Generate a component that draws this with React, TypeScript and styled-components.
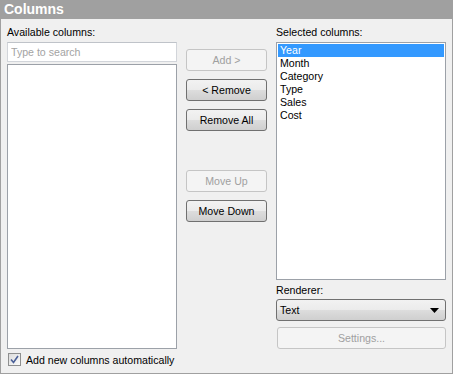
import React from 'react';
import styled, { createGlobalStyle, css } from 'styled-components';

const GlobalStyle = createGlobalStyle`
  html, body {
    margin: 0;
    padding: 0;
    background: #ffffff;
  }
  body {
    font-family: "Liberation Sans", Arial, sans-serif;
    font-size: 10.6px;
    color: #000;
  }
`;

const available: string[] = [];
const selected = ['Year', 'Month', 'Category', 'Type', 'Sales', 'Cost'];

const App = () => {
  return (
    <>
      <GlobalStyle />
      <Panel>
        <Header>Columns</Header>
        <Body>
          <Column>
            <Label>Available columns:</Label>
            <Search placeholder="Type to search" />
            <List $grow>
              {available.map(item => (
                <Item key={item}>{item}</Item>
              ))}
            </List>
            <CheckRow>
              <CheckBox>
                <svg width="9" height="9" viewBox="0 0 9 9">
                  <path d="M1 4.5 L3.5 7.5 L8 1" fill="none" stroke="#4a5f97" strokeWidth="1.6" />
                </svg>
              </CheckBox>
              Add new columns automatically
            </CheckRow>
          </Column>

          <Middle>
            <Button disabled>Add &gt;</Button>
            <Button>&lt; Remove</Button>
            <Button>Remove All</Button>
            <Spacer />
            <Button disabled>Move Up</Button>
            <Button>Move Down</Button>
          </Middle>

          <Column>
            <Label>Selected columns:</Label>
            <List $height={238}>
              {selected.map((item, i) => (
                <Item key={item} $active={i === 0}>{item}</Item>
              ))}
            </List>
            <Label $top={4}>Renderer:</Label>
            <Select>
              <span>Text</span>
              <svg width="9" height="5" viewBox="0 0 9 5">
                <path d="M0 0 H9 L4.5 5 Z" fill="#000" />
              </svg>
            </Select>
            <Button disabled $wide>Settings...</Button>
          </Column>
        </Body>
      </Panel>
    </>
  );
};

export default App;

const Panel = styled.div`
  display: flex;
  flex-direction: column;
  width: 453px;
  height: 374px;
  box-sizing: border-box;
`;

const Header = styled.div`
  height: 19px;
  flex: none;
  background: #a0a0a0;
  color: #fff;
  font-weight: bold;
  font-size: 14px;
  line-height: 19px;
  padding-left: 4px;
`;

const Body = styled.div`
  flex: 1;
  display: grid;
  grid-template-columns: 170px 81px 170px;
  column-gap: 9px;
  padding: 7px 6px 6px 6px;
  background: #f0f0f0;
  border: 1px solid #a0a0a0;
  border-top: none;
  min-height: 0;
`;

const Column = styled.div`
  display: flex;
  flex-direction: column;
  min-height: 0;
`;

const Middle = styled.div`
  display: flex;
  flex-direction: column;
  gap: 8px;
  padding-top: 23px;
`;

const Spacer = styled.div`
  height: 23px;
`;

const Label = styled.div<{ $top?: number }>`
  height: 13px;
  line-height: 13px;
  margin-top: ${({ $top }) => $top || 0}px;
  margin-bottom: 3px;
  white-space: nowrap;
`;

const Search = styled.input`
  box-sizing: border-box;
  height: 20px;
  width: 100%;
  margin: 0 0 2px 0;
  padding: 0 3px;
  border: 1px solid #d2d5da;
  border-top-color: #bfc3c9;
  background: #fff;
  font-family: inherit;
  font-size: inherit;
  outline: none;

  &::placeholder {
    color: #a3a3a3;
  }
`;

const List = styled.div<{ $grow?: boolean; $height?: number }>`
  box-sizing: border-box;
  border: 1px solid #9ca1a8;
  background: #fff;
  padding: 1px;
  ${({ $grow }) => $grow && css`flex: 1;`}
  ${({ $height }) => $height && css`height: ${$height}px; flex: none;`}
`;

const Item = styled.div<{ $active?: boolean }>`
  height: 13px;
  line-height: 13px;
  padding-left: 2px;
  white-space: nowrap;
  background: ${({ $active }) => ($active ? '#3399ff' : 'transparent')};
  color: ${({ $active }) => ($active ? '#fff' : '#000')};
`;

const CheckRow = styled.label`
  display: flex;
  align-items: center;
  gap: 5px;
  height: 15px;
  margin-top: 3px;
  margin-left: 1px;
  white-space: nowrap;
`;

const CheckBox = styled.span`
  box-sizing: border-box;
  width: 13px;
  height: 13px;
  border: 1px solid #8e8f8f;
  background: linear-gradient(135deg, #dcdcdc, #fbfbfb);
  display: flex;
  align-items: center;
  justify-content: center;
`;

const Button = styled.button<{ $wide?: boolean }>`
  box-sizing: border-box;
  height: 22px;
  width: 100%;
  flex: none;
  margin: 0;
  padding: 0;
  border-radius: 3px;
  font-family: inherit;
  font-size: inherit;
  border: 1px solid #707070;
  color: #000;
  background: linear-gradient(#f2f2f2 0%, #ebebeb 50%, #dddddd 50%, #cfcfcf 100%);
  ${({ $wide }) => $wide && css`margin-top: 6px; margin-left: 1px; width: 169px;`}

  &:disabled {
    border-color: #c5c5c5;
    background: #f4f4f4;
    color: #a0a0a0;
  }
`;

const Select = styled.div`
  box-sizing: border-box;
  height: 22px;
  margin-top: -1px;
  display: flex;
  align-items: center;
  justify-content: space-between;
  padding: 0 6px 0 3px;
  border: 1px solid #707070;
  border-radius: 3px;
  background: linear-gradient(#f2f2f2 0%, #ebebeb 50%, #dddddd 50%, #cfcfcf 100%);
`;
